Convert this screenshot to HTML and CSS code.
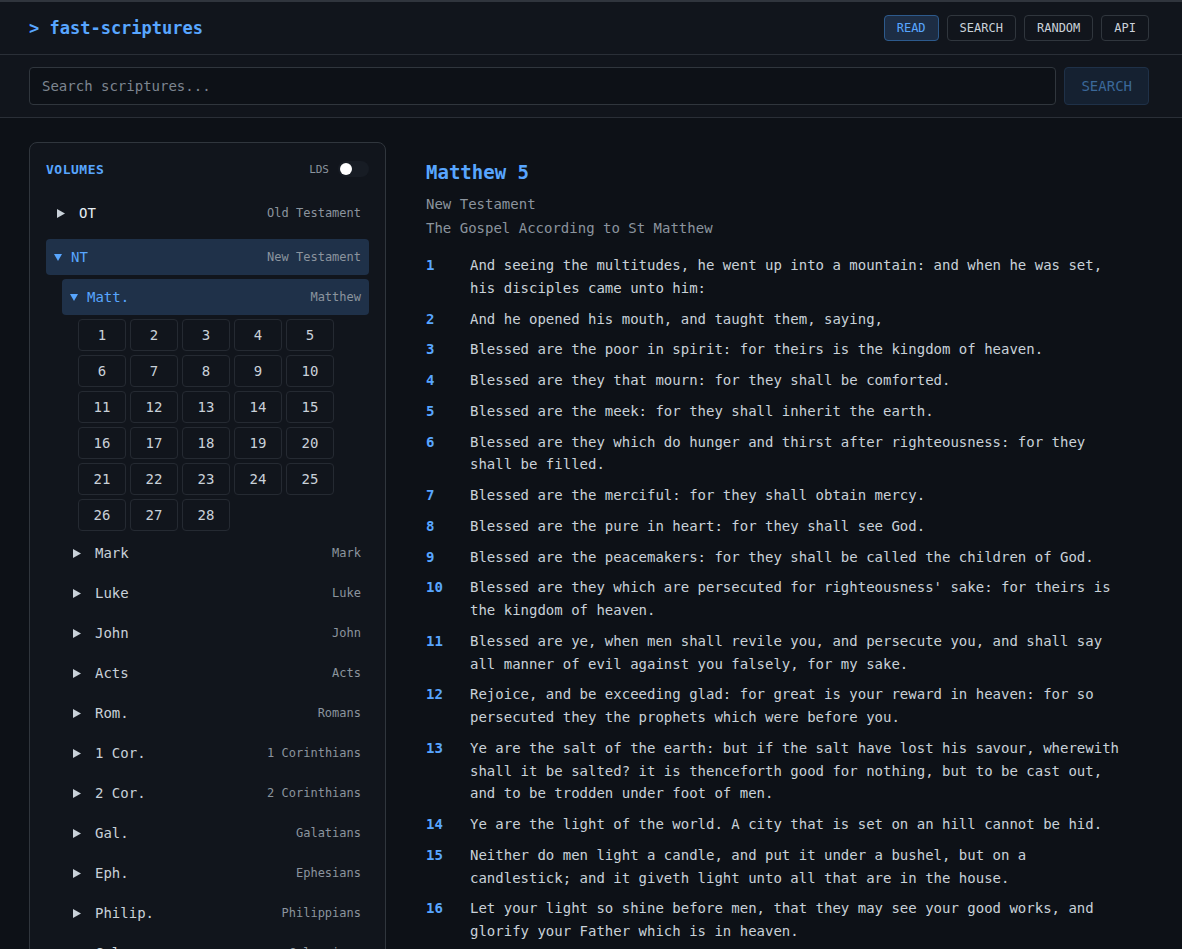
FILE: index.html
```html
<!DOCTYPE html>
<html lang="en">
<head>
<meta charset="utf-8">
<title>fast-scriptures</title>
<link rel="stylesheet" href="styles.css">
</head>
<body>
<header class="topbar">
  <div class="brand">&gt; fast-scriptures</div>
  <nav class="nav">
    <button class="nav-btn active">READ</button>
    <button class="nav-btn">SEARCH</button>
    <button class="nav-btn">RANDOM</button>
    <button class="nav-btn">API</button>
  </nav>
</header>
<div class="searchbar">
  <input class="search-input" type="text" placeholder="Search scriptures...">
  <button class="search-btn">SEARCH</button>
</div>
<main class="layout">
  <aside class="sidebar">
    <div class="sidebar-head">
      <span class="sidebar-title">VOLUMES</span>
      <span class="lds">LDS <span class="toggle"><span class="knob"></span></span></span>
    </div>

    <div class="volume">
      <div class="row">
        <svg class="arrow closed" width="8" height="9" viewBox="0 0 8 9"><polygon points="0,0 8,4.5 0,9" fill="#c9d1d9"/></svg>
        <span class="row-label strong">OT</span>
        <span class="row-name">Old Testament</span>
      </div>
    </div>

    <div class="volume">
      <div class="row selected">
        <svg class="arrow open" width="8" height="7" viewBox="0 0 8 7"><polygon points="0,0 8,0 4,7" fill="#58a6ff"/></svg>
        <span class="row-label blue">NT</span>
        <span class="row-name">New Testament</span>
      </div>
      <div class="row book selected">
        <svg class="arrow open" width="8" height="7" viewBox="0 0 8 7"><polygon points="0,0 8,0 4,7" fill="#58a6ff"/></svg>
        <span class="row-label blue">Matt.</span>
        <span class="row-name">Matthew</span>
      </div>
      <div class="chapters">
        <span class="ch">1</span><span class="ch">2</span><span class="ch">3</span><span class="ch">4</span><span class="ch">5</span>
        <span class="ch">6</span><span class="ch">7</span><span class="ch">8</span><span class="ch">9</span><span class="ch">10</span>
        <span class="ch">11</span><span class="ch">12</span><span class="ch">13</span><span class="ch">14</span><span class="ch">15</span>
        <span class="ch">16</span><span class="ch">17</span><span class="ch">18</span><span class="ch">19</span><span class="ch">20</span>
        <span class="ch">21</span><span class="ch">22</span><span class="ch">23</span><span class="ch">24</span><span class="ch">25</span>
        <span class="ch">26</span><span class="ch">27</span><span class="ch">28</span>
      </div>
      <div class="row book"><svg class="arrow closed" width="8" height="9" viewBox="0 0 8 9"><polygon points="0,0 8,4.5 0,9" fill="#c9d1d9"/></svg><span class="row-label">Mark</span><span class="row-name">Mark</span></div>
      <div class="row book"><svg class="arrow closed" width="8" height="9" viewBox="0 0 8 9"><polygon points="0,0 8,4.5 0,9" fill="#c9d1d9"/></svg><span class="row-label">Luke</span><span class="row-name">Luke</span></div>
      <div class="row book"><svg class="arrow closed" width="8" height="9" viewBox="0 0 8 9"><polygon points="0,0 8,4.5 0,9" fill="#c9d1d9"/></svg><span class="row-label">John</span><span class="row-name">John</span></div>
      <div class="row book"><svg class="arrow closed" width="8" height="9" viewBox="0 0 8 9"><polygon points="0,0 8,4.5 0,9" fill="#c9d1d9"/></svg><span class="row-label">Acts</span><span class="row-name">Acts</span></div>
      <div class="row book"><svg class="arrow closed" width="8" height="9" viewBox="0 0 8 9"><polygon points="0,0 8,4.5 0,9" fill="#c9d1d9"/></svg><span class="row-label">Rom.</span><span class="row-name">Romans</span></div>
      <div class="row book"><svg class="arrow closed" width="8" height="9" viewBox="0 0 8 9"><polygon points="0,0 8,4.5 0,9" fill="#c9d1d9"/></svg><span class="row-label">1 Cor.</span><span class="row-name">1 Corinthians</span></div>
      <div class="row book"><svg class="arrow closed" width="8" height="9" viewBox="0 0 8 9"><polygon points="0,0 8,4.5 0,9" fill="#c9d1d9"/></svg><span class="row-label">2 Cor.</span><span class="row-name">2 Corinthians</span></div>
      <div class="row book"><svg class="arrow closed" width="8" height="9" viewBox="0 0 8 9"><polygon points="0,0 8,4.5 0,9" fill="#c9d1d9"/></svg><span class="row-label">Gal.</span><span class="row-name">Galatians</span></div>
      <div class="row book"><svg class="arrow closed" width="8" height="9" viewBox="0 0 8 9"><polygon points="0,0 8,4.5 0,9" fill="#c9d1d9"/></svg><span class="row-label">Eph.</span><span class="row-name">Ephesians</span></div>
      <div class="row book"><svg class="arrow closed" width="8" height="9" viewBox="0 0 8 9"><polygon points="0,0 8,4.5 0,9" fill="#c9d1d9"/></svg><span class="row-label">Philip.</span><span class="row-name">Philippians</span></div>
      <div class="row book"><svg class="arrow closed" width="8" height="9" viewBox="0 0 8 9"><polygon points="0,0 8,4.5 0,9" fill="#c9d1d9"/></svg><span class="row-label">Col.</span><span class="row-name">Colossians</span></div>
      <div class="row book"><svg class="arrow closed" width="8" height="9" viewBox="0 0 8 9"><polygon points="0,0 8,4.5 0,9" fill="#c9d1d9"/></svg><span class="row-label">1 Thes.</span><span class="row-name">1 Thessalonians</span></div>
    </div>
  </aside>

  <section class="reader">
    <h1 class="chapter-title">Matthew 5</h1>
    <div class="meta">New Testament</div>
    <div class="meta">The Gospel According to St Matthew</div>
    <ol class="verses">
      <li class="verse"><span class="vnum">1</span><span class="vtext">And seeing the multitudes, he went up into a mountain: and when he was set, his disciples came unto him:</span></li>
      <li class="verse"><span class="vnum">2</span><span class="vtext">And he opened his mouth, and taught them, saying,</span></li>
      <li class="verse"><span class="vnum">3</span><span class="vtext">Blessed are the poor in spirit: for theirs is the kingdom of heaven.</span></li>
      <li class="verse"><span class="vnum">4</span><span class="vtext">Blessed are they that mourn: for they shall be comforted.</span></li>
      <li class="verse"><span class="vnum">5</span><span class="vtext">Blessed are the meek: for they shall inherit the earth.</span></li>
      <li class="verse"><span class="vnum">6</span><span class="vtext">Blessed are they which do hunger and thirst after righteousness: for they shall be filled.</span></li>
      <li class="verse"><span class="vnum">7</span><span class="vtext">Blessed are the merciful: for they shall obtain mercy.</span></li>
      <li class="verse"><span class="vnum">8</span><span class="vtext">Blessed are the pure in heart: for they shall see God.</span></li>
      <li class="verse"><span class="vnum">9</span><span class="vtext">Blessed are the peacemakers: for they shall be called the children of God.</span></li>
      <li class="verse"><span class="vnum">10</span><span class="vtext">Blessed are they which are persecuted for righteousness' sake: for theirs is the kingdom of heaven.</span></li>
      <li class="verse"><span class="vnum">11</span><span class="vtext">Blessed are ye, when men shall revile you, and persecute you, and shall say all manner of evil against you falsely, for my sake.</span></li>
      <li class="verse"><span class="vnum">12</span><span class="vtext">Rejoice, and be exceeding glad: for great is your reward in heaven: for so persecuted they the prophets which were before you.</span></li>
      <li class="verse"><span class="vnum">13</span><span class="vtext">Ye are the salt of the earth: but if the salt have lost his savour, wherewith shall it be salted? it is thenceforth good for nothing, but to be cast out, and to be trodden under foot of men.</span></li>
      <li class="verse"><span class="vnum">14</span><span class="vtext">Ye are the light of the world. A city that is set on an hill cannot be hid.</span></li>
      <li class="verse"><span class="vnum">15</span><span class="vtext">Neither do men light a candle, and put it under a bushel, but on a candlestick; and it giveth light unto all that are in the house.</span></li>
      <li class="verse"><span class="vnum">16</span><span class="vtext">Let your light so shine before men, that they may see your good works, and glorify your Father which is in heaven.</span></li>
      <li class="verse"><span class="vnum">17</span><span class="vtext">Think not that I am come to destroy the law, or the prophets: I am not come to destroy, but to fulfil.</span></li>
      <li class="verse"><span class="vnum">18</span><span class="vtext">For verily I say unto you, Till heaven and earth pass, one jot or one tittle shall in no wise pass from the law, till all be fulfilled.</span></li>
    </ol>
  </section>
</main>
</body>
</html>
```

FILE: styles.css
```css
* { box-sizing: border-box; }

html, body {
  margin: 0;
  padding: 0;
}

body {
  background: #0d1117;
  color: #c9d1d9;
  font-family: "DejaVu Sans Mono", "Liberation Mono", monospace;
  font-size: 14px;
}

.topbar {
  display: flex;
  align-items: center;
  justify-content: space-between;
  height: 55px;
  padding: 0 33px 0 29px;
  background: #11151c;
  border-top: 2px solid #30353d;
  border-bottom: 1px solid #2a2f37;
}

.brand {
  color: #58a6ff;
  font-size: 17px;
  font-weight: bold;
}

.nav {
  display: flex;
  gap: 8px;
}

.nav-btn {
  height: 26px;
  padding: 0 12px;
  font-family: inherit;
  font-size: 12px;
  color: #c9d1d9;
  background: transparent;
  border: 1px solid #30363d;
  border-radius: 4px;
}

.nav-btn.active {
  color: #58a6ff;
  background: #1d2d44;
  border-color: #2d5a8c;
}

.searchbar {
  display: flex;
  gap: 8px;
  padding: 12px 33px 12px 29px;
  background: #11151c;
  border-bottom: 1px solid #2a2f37;
}

.search-input {
  flex: 1;
  height: 38px;
  padding: 0 12px;
  font-family: inherit;
  font-size: 14px;
  color: #c9d1d9;
  background: #0d1117;
  border: 1px solid #30363d;
  border-radius: 4px;
  outline: none;
}

.search-input::placeholder {
  color: #7d8590;
}

.search-btn {
  height: 38px;
  padding: 0 16px;
  font-family: inherit;
  font-size: 14px;
  color: #3b6899;
  background: #152131;
  border: 1px solid #1f3148;
  border-radius: 4px;
}

.layout {
  display: flex;
  align-items: flex-start;
  gap: 40px;
  padding: 24px 33px 0 29px;
}

.sidebar {
  flex: 0 0 357px;
  width: 357px;
  padding: 16px;
  background: #11151c;
  border: 1px solid #30363d;
  border-radius: 8px;
}

.sidebar-head {
  display: flex;
  align-items: center;
  justify-content: space-between;
  height: 20px;
  margin-bottom: 16px;
}

.sidebar-title {
  color: #58a6ff;
  font-size: 13px;
  font-weight: bold;
  letter-spacing: 0.5px;
}

.lds {
  display: flex;
  align-items: center;
  gap: 9px;
  color: #8b949e;
  font-size: 11px;
}

.toggle {
  display: flex;
  align-items: center;
  width: 31px;
  height: 16px;
  padding: 0 2px;
  background: #171c24;
  border-radius: 8px;
}

.knob {
  width: 12px;
  height: 12px;
  border-radius: 50%;
  background: #ffffff;
}

.volume {
  padding-bottom: 4px;
}

.row {
  display: flex;
  align-items: center;
  height: 36px;
  padding: 0 8px;
  margin-bottom: 4px;
  border-radius: 4px;
}

.row.book {
  margin-left: 16px;
}

.row.selected {
  background: #1f3149;
}

.arrow {
  flex: 0 0 auto;
}

.arrow.closed {
  margin-left: 3px;
  margin-right: 14px;
}

.arrow.open {
  margin-right: 9px;
}

.row-label {
  color: #c9d1d9;
  font-size: 14px;
}

.row-label.strong {
  color: #e6edf3;
}

.row-label.blue {
  color: #58a6ff;
}

.row-name {
  margin-left: auto;
  color: #8b949e;
  font-size: 12px;
}

.chapters {
  display: grid;
  grid-template-columns: repeat(5, 48px);
  grid-auto-rows: 32px;
  gap: 4px;
  margin: 0 0 4px 32px;
}

.ch {
  display: flex;
  align-items: center;
  justify-content: center;
  color: #c9d1d9;
  font-size: 14px;
  border: 1px solid #252a32;
  border-radius: 4px;
}

.reader {
  flex: 1;
  max-width: 700px;
  padding-top: 16px;
}

.chapter-title {
  margin: 0 0 6px 0;
  color: #58a6ff;
  font-size: 19px;
  font-weight: bold;
  line-height: 28px;
}

.meta {
  color: #8b949e;
  font-size: 14px;
  line-height: 24px;
}

.verses {
  list-style: none;
  margin: 14px 0 0 0;
  padding: 0;
}

.verse {
  display: flex;
  margin-bottom: 8px;
  line-height: 22.75px;
}

.vnum {
  flex: 0 0 44px;
  color: #58a6ff;
  font-weight: bold;
}

.vtext {
  flex: 1;
  color: #c9d1d9;
}
```
